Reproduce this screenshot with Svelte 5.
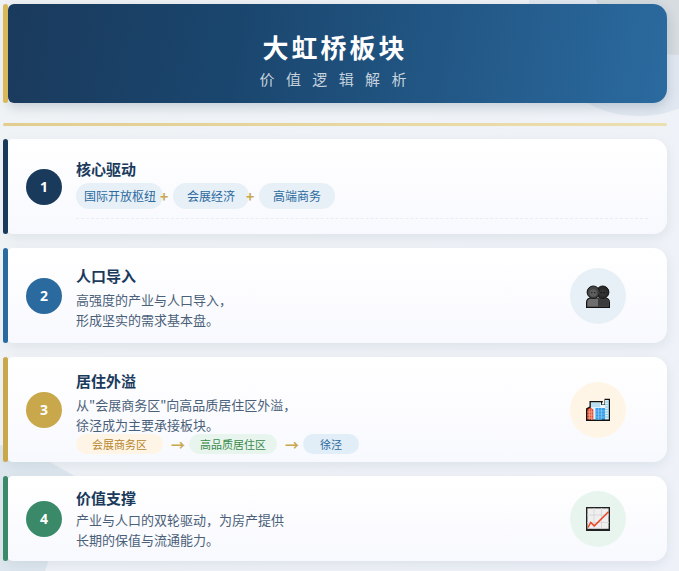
<script>
  const cards = [
    { n: 1, title: '核心驱动', color: '#1a3a5c', pills: ['国际开放枢纽', '会展经济', '高端商务'] },
    { n: 2, title: '人口导入', color: '#2b6a9f', lines: ['高强度的产业与人口导入，', '形成坚实的需求基本盘。'], icon: 'people', iconBg: '#e8f0f7' },
    { n: 3, title: '居住外溢', color: '#c9a84c', lines: ['从"会展商务区"向高品质居住区外溢，', '徐泾成为主要承接板块。'], flow: true, icon: 'city', iconBg: '#fff5e6' },
    { n: 4, title: '价值支撑', color: '#3a8a6a', lines: ['产业与人口的双轮驱动，为房产提供', '长期的保值与流通能力。'], icon: 'chart', iconBg: '#e8f5ee' }
  ];
</script>

<div class="page">
  <div class="blob blob--gold"></div>
  <div class="blob blob--top"></div>
  <div class="blob blob--bottom"></div>

  <header class="hero">
    <h1>大虹桥板块</h1>
    <p>价 值 逻 辑 解 析</p>
  </header>

  <div class="rule"></div>

  <div class="list">
    {#each cards as card}
      <section class="card card--{card.n}" style="--accent: {card.color}">
        <div class="num">{card.n}</div>
        <div class="body">
          <h2>{card.title}</h2>
          {#if card.pills}
            <div class="pills">
              {#each card.pills as pill, i}
                {#if i > 0}<span class="plus">+</span>{/if}
                <span class="pill">{pill}</span>
              {/each}
            </div>
            <div class="dash"></div>
          {/if}
          {#if card.lines}
            <p class="desc">{card.lines[0]}<br />{card.lines[1]}</p>
          {/if}
          {#if card.flow}
            <div class="flow">
              <span class="step step--gold">会展商务区</span>
              <span class="arrow">→</span>
              <span class="step step--green">高品质居住区</span>
              <span class="arrow">→</span>
              <span class="step step--blue">徐泾</span>
            </div>
          {/if}
        </div>
        {#if card.icon}
          <div class="icon" style="background: {card.iconBg}">
            {#if card.icon === 'people'}
              <svg width="24" height="24" viewBox="0 0 24 24">
                <path d="M.6 23.400v-5q0-3.800 4-4.400h14.800q4 .6 4 4.400v5z" fill="#6e6e6e" stroke="#111" stroke-width="1.200" />
                <path d="M12 14.600h7.300q3.500 .5 3.500 3.800v4.400H12z" fill="#3c3c3c" />
                <circle cx="16.700" cy="8.200" r="6.200" fill="#2a2a2a" stroke="#111" />
                <circle cx="7.300" cy="8.200" r="6.200" fill="#444" stroke="#111" />
                <circle cx="7.300" cy="9" r="3.800" fill="#5e5e5e" />
                <circle cx="16.700" cy="9" r="3.800" fill="#333" />
                <circle cx="5.800" cy="8.600" r=".7" fill="#111" /><circle cx="8.800" cy="8.600" r=".7" fill="#111" />
                <circle cx="15.200" cy="8.600" r=".7" fill="#000" /><circle cx="18.200" cy="8.600" r=".7" fill="#000" />
              </svg>
            {:else if card.icon === 'city'}
              <svg width="24" height="24" viewBox="0 0 24 24">
                <path d="M0 23V10.500l3.500-2V3H17l-1.500 3.500h3V.7H24V23z" fill="#111" />
                <rect x="4.800" y="4.300" width="10.200" height="17.200" fill="#dff1fa" />
                <rect x="19" y="2" width="3.800" height="19.500" fill="#d6edf8" />
                <rect x="15" y="7" width="4" height="3" fill="#eef8fc" />
                <path d="M5 6h9M5 8h9M19 4h4M19 6.500h4M19 9h4M19 11.500h4M19 14h4M19 16.500h4M19 19h4" stroke="#7cc4e6" stroke-width=".8" />
                <rect x="9.500" y="10" width="9.500" height="11.500" fill="#3a9be8" />
                <path d="M9.500 13h9.500M9.500 16h9.500M9.500 19h9.500M12.500 10v11.500M15.500 10v11.500" stroke="#85c8f4" stroke-width=".7" />
                <path d="M1.300 21.500V11.500l3-2 3 2v10z" fill="#e8452c" />
                <path d="M1.300 14h6M1.300 17h6M1.300 20h6M3.300 11v10.500M5.300 11v10.500" stroke="#f7b9a0" stroke-width=".7" />
              </svg>
            {:else}
              <svg width="24" height="24" viewBox="0 0 24 24">
                <rect x=".7" y=".7" width="22.600" height="22.600" fill="#efefef" stroke="#222" stroke-width="1.400" />
                <rect x="0" y="21.800" width="24" height="2.200" fill="#222" />
                <path d="M8 1v21M15.500 1v21M1 8h22M1 15.500h22" stroke="#d6d6d6" stroke-width=".9" />
                <path d="M2 20.500l2.700-5 3.600 3.400L22.500 4.700" fill="none" stroke="#ee4527" stroke-width="1.500" />
              </svg>
            {/if}
          </div>
        {/if}
      </section>
    {/each}
  </div>
</div>

<style>
  :global(body) {
    margin: 0;
    font-family: "Noto Sans CJK SC", "Noto Sans", sans-serif;
  }

  .page {
    position: relative;
    width: 679px;
    height: 571px;
    box-sizing: border-box;
    padding: 4px 12px 0 3px;
    overflow: hidden;
    background: linear-gradient(135deg, #f0f3f5 0%, #eef1f8 100%);
  }

  .blob { position: absolute; }
  .blob--gold {
    top: -125px;
    right: -90px;
    width: 180px;
    height: 180px;
    border-radius: 50%;
    background: rgba(120, 110, 70, 0.09);
  }
  .blob--top {
    top: -104px;
    right: -70px;
    width: 220px;
    height: 220px;
    border-radius: 50%;
    background: rgba(43, 106, 159, 0.07);
  }
  .blob--bottom {
    left: 0;
    top: 440px;
    width: 90px;
    height: 131px;
    clip-path: polygon(0 5px, 50px 22px, 78px 38px, 45px 131px, 0 131px);
    background: rgba(43, 106, 159, 0.09);
  }

  .hero {
    position: relative;
    height: 99px;
    margin-left: 5px;
    box-sizing: border-box;
    padding-top: 26px;
    text-align: center;
    color: #fff;
    border-radius: 6px 14px 14px 6px;
    background: linear-gradient(100deg, #1a3a5c 0%, #1a466e 35%, #2b6a9f 100%);
    box-shadow: 0 4px 12px rgba(26, 58, 92, 0.2);
  }
  .hero::before {
    content: '';
    position: absolute;
    left: -5px;
    top: 0;
    bottom: 0;
    width: 5px;
    border-radius: 3px;
    background: #d8b858;
  }
  .hero h1 {
    margin: 0 0 0 -5px;
    font-size: 26px;
    line-height: 34px;
    font-weight: 700;
    letter-spacing: 3px;
  }
  .hero p {
    margin: 5px 0 0 -5px;
    font-size: 15px;
    line-height: 20px;
    letter-spacing: 4px;
    color: rgba(255, 255, 255, 0.75);
  }

  .rule {
    position: relative;
    height: 3px;
    margin: 20px 0 13px;
    border-radius: 2px;
    background: linear-gradient(90deg, #e2cd8f, #ecdfb0);
  }

  .list {
    position: relative;
    display: flex;
    flex-direction: column;
    gap: 14px;
  }

  .card {
    position: relative;
    display: flex;
    align-items: center;
    height: 95px;
    margin-left: 4px;
    box-sizing: border-box;
    padding: 0 19px 0 19px;
    border-radius: 6px 14px 14px 6px;
    background: linear-gradient(180deg, #fff 0%, #f8f9fe 100%);
    box-shadow: 0 4px 12px rgba(26, 58, 92, 0.08);
  }
  .card--3 { height: 105px; }
  .card--4 { height: 85px; }
  .card::before {
    content: '';
    position: absolute;
    left: -4px;
    top: 0;
    bottom: 0;
    width: 5px;
    border-radius: 3px;
    background: var(--accent);
  }

  .num {
    flex: none;
    width: 36px;
    height: 36px;
    margin-right: 14px;
    border-radius: 50%;
    background: var(--accent);
    color: #fff;
    font: 700 14px/36px "Noto Sans", sans-serif;
    text-align: center;
  }

  .body { flex: 1; min-width: 0; }
  .card--1 .body, .card--2 .body { padding-top: 4px; }
  .card--3 .body { padding-top: 6px; }

  h2 {
    margin: 0;
    font-size: 15px;
    line-height: 20px;
    font-weight: 700;
    color: #1a3a5c;
  }

  .desc {
    margin: 4px 0 0;
    font-size: 13px;
    line-height: 20px;
    color: #4a6078;
  }
  .card--4 .desc { margin-top: 2px; }

  .pills {
    display: flex;
    align-items: center;
    margin-top: 4px;
  }
  .pill {
    padding: 0 14px;
    font-size: 12px;
    line-height: 26px;
    border-radius: 13px;
    background: #e8f0f7;
    color: #2b6a9f;
  }
  .pill:first-child { padding: 0 7px 0 8px; }
  .plus {
    position: relative;
    width: 8px;
    margin: 0 5px 0 -3px;
    font-size: 14px;
    line-height: 26px;
    font-weight: 700;
    text-align: center;
    color: #c9a84c;
  }

  .dash {
    margin-top: 9px;
    border-top: 1px dashed #e8edf4;
  }

  .flow {
    display: flex;
    align-items: center;
    gap: 6px;
    margin-top: -1px;
  }
  .step {
    font-size: 11px;
    line-height: 20px;
    border-radius: 10px;
  }
  .step--gold { padding: 0 16px; background: #fff5e6; color: #b8862e; }
  .step--green { padding: 0 11px; background: #e8f5ee; color: #3a8a4a; }
  .step--blue { padding: 0 17px; background: #e1eef7; color: #2b6a9f; }
  .arrow {
    width: 14px;
    box-sizing: border-box;
    padding-left: 2px;
    font-size: 14px;
    line-height: 20px;
    font-weight: 700;
    text-align: center;
    color: #c9a84c;
  }

  .icon {
    flex: none;
    display: flex;
    align-items: center;
    justify-content: center;
    width: 56px;
    height: 56px;
    margin-right: 22px;
    border-radius: 50%;
  }
</style>
